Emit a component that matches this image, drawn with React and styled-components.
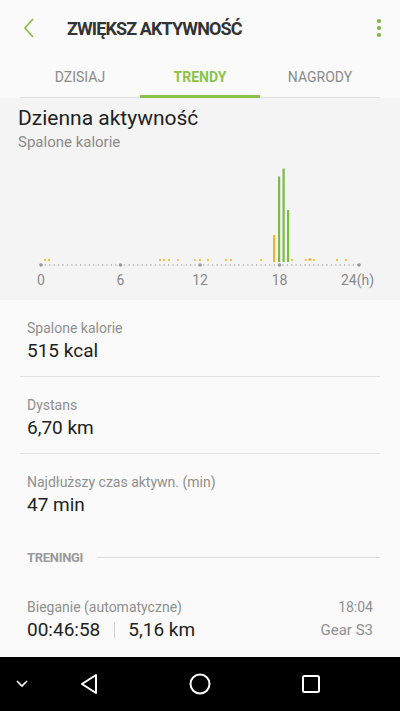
import React from 'react';
import styled, { createGlobalStyle } from 'styled-components';

const GlobalStyle = createGlobalStyle`
  html, body {
    margin: 0;
    padding: 0;
    background: #fafafa;
    font-family: Roboto, "Noto Sans", sans-serif;
  }
  * { box-sizing: border-box; }
`;

const Screen = styled.div`
  width: 400px;
  height: 711px;
  display: flex;
  flex-direction: column;
  background: #fafafa;
  overflow: hidden;

  & > * { flex-shrink: 0; }
`;

const Header = styled.header`
  height: 56px;
  display: flex;
  align-items: center;
  padding: 0 18px 0 22px;
`;

const Title = styled.h1`
  flex: 1;
  margin: 0 0 0 31px;
  font-size: 18px;
  font-weight: 700;
  letter-spacing: -0.9px;
  color: #333;
`;

const Tabs = styled.nav`
  margin: 0 20px;
  height: 42px;
  display: grid;
  grid-template-columns: repeat(3, 1fr);
  border-bottom: 1px solid #e0e0e0;
`;

const Tab = styled.div`
  display: flex;
  align-items: center;
  justify-content: center;
  font-size: 14px;
  font-weight: ${(p) => (p.$active ? 700 : 400)};
  color: ${(p) => (p.$active ? '#8bc34a' : '#8a8a8a')};
  border-bottom: 3px solid ${(p) => (p.$active ? '#8bc34a' : 'transparent')};
  margin-bottom: -1px;
  padding-top: 2px;
`;

const ChartSection = styled.section`
  background: #f4f4f4;
  padding: 6px 0 0;
  height: 202px;
`;

const ChartTitle = styled.div`
  padding-left: 18px;
  font-size: 21px;
  color: #222;
  line-height: 28px;
`;

const ChartSub = styled.div`
  padding-left: 18px;
  font-size: 15px;
  color: #8a8a8a;
  line-height: 20px;
`;

const Content = styled.div`
  flex: 1 1 auto;
  min-height: 0;
  overflow: hidden;
  padding: 0 20px;
`;

const Stat = styled.div`
  padding: 18px 7px 0;
  border-bottom: ${(p) => (p.$last ? 'none' : '1px solid #e2e2e2')};
  height: 77px;
`;

const Label = styled.div`
  font-size: 14px;
  color: #8f8f8f;
  line-height: 20px;
`;

const Value = styled.div`
  font-size: 19px;
  color: #222;
  line-height: 26px;
`;

const SectionHead = styled.div`
  display: flex;
  align-items: center;
  gap: 14px;
  padding-left: 7px;
  height: 52px;
  font-size: 13px;
  font-weight: 700;
  color: #9a9a9a;
  letter-spacing: -0.3px;

  &::after {
    content: '';
    flex: 1;
    height: 1px;
    background: #dcdcdc;
  }
`;

const Workout = styled.div`
  display: grid;
  grid-template-columns: 1fr auto;
  padding: 14px 7px 0;
`;

const Right = styled.div`
  text-align: right;
  color: #8f8f8f;
  font-size: ${(p) => p.$size || 14}px;
  line-height: ${(p) => (p.$size ? 26 : 20)}px;
`;

const Sep = styled.span`
  display: inline-block;
  width: 1px;
  height: 16px;
  background: #cfcfcf;
  margin: 0 13px 0 14px;
  vertical-align: -2px;
`;

const NavBar = styled.div`
  height: 54px;
  background: #000;
  position: relative;
`;

const NavSlot = styled.div`
  position: absolute;
  left: ${(p) => p.$x}px;
  top: 50%;
  transform: translate(-50%, -50%);
  display: flex;
`;

const dotsX = [45, 49, 160, 164, 169, 178, 195, 200, 208, 226, 231, 261, 292, 306, 314, 337, 346];

const Chart = () => {
  const base = 265;
  const top = 152;
  const ticks = [];
  for (let x = 41; x <= 359; x += 4.4) ticks.push(x);
  const majors = [41, 120.5, 200, 279.5, 359];
  const labels = ['0', '6', '12', '18', '24(h)'];
  return (
    <svg width="400" height="148" viewBox={`0 ${top} 400 148`} style={{ display: 'block' }}>
      {ticks.map((x, i) => (
        <circle key={i} cx={x} cy={base} r="0.8" fill="#a8a8a8" />
      ))}
      {majors.map((x, i) => (
        <circle key={'m' + i} cx={x} cy={base} r="1.8" fill="#9a9a9a" />
      ))}
      {dotsX.map((x, i) => (
        <circle key={'d' + i} cx={x} cy={260} r="1.1" fill="#f5b625" />
      ))}
      <circle cx={310} cy={259.5} r="1.6" fill="#f5b625" />
      <rect x={273} y={235} width={2.2} height={27} fill="#f5b625" />
      <rect x={278} y={176.5} width={2.2} height={85.5} fill="#7cba45" />
      <rect x={282.5} y={168.5} width={2.2} height={93.5} fill="#7cba45" />
      <rect x={287} y={210} width={2.2} height={52} fill="#7cba45" />
      {majors.map((x, i) => (
        <text
          key={'l' + i}
          x={i === 4 ? x - 18 : x}
          y={285}
          textAnchor={i === 4 ? 'start' : 'middle'}
          fontFamily="Roboto, sans-serif"
          fontSize="14"
          fill="#8a8a8a"
        >
          {labels[i]}
        </text>
      ))}
    </svg>
  );
};

const stats = [
  { label: 'Spalone kalorie', value: '515 kcal' },
  { label: 'Dystans', value: '6,70 km' },
  { label: 'Najdłuższy czas aktywn. (min)', value: '47 min' },
];

const App = () => (
  <Screen>
    <GlobalStyle />
    <Header>
      <svg width="14" height="22" viewBox="0 0 14 22">
        <path d="M11 2 L3 11 L11 20" fill="none" stroke="#8bc34a" strokeWidth="1.8" />
      </svg>
      <Title>ZWIĘKSZ AKTYWNOŚĆ</Title>
      <svg width="6" height="20" viewBox="0 0 6 20">
        <circle cx="3" cy="3" r="2.1" fill="#7cb342" />
        <circle cx="3" cy="10" r="2.1" fill="#7cb342" />
        <circle cx="3" cy="17" r="2.1" fill="#7cb342" />
      </svg>
    </Header>
    <Tabs>
      <Tab>DZISIAJ</Tab>
      <Tab $active>TRENDY</Tab>
      <Tab>NAGRODY</Tab>
    </Tabs>
    <ChartSection>
      <ChartTitle>Dzienna aktywność</ChartTitle>
      <ChartSub>Spalone kalorie</ChartSub>
      <Chart />
    </ChartSection>
    <Content>
      {stats.map((s, i) => (
        <Stat key={s.label} $last={i === stats.length - 1}>
          <Label>{s.label}</Label>
          <Value>{s.value}</Value>
        </Stat>
      ))}
      <SectionHead>TRENINGI</SectionHead>
      <Workout>
        <Label>Bieganie (automatyczne)</Label>
        <Right>18:04</Right>
        <Value>
          00:46:58<Sep />5,16 km
        </Value>
        <Right $size={15}>Gear S3</Right>
      </Workout>
    </Content>
    <NavBar>
      <NavSlot $x={22}>
        <svg width="14" height="10" viewBox="0 0 14 10">
          <path d="M2 2 L7 7 L12 2" fill="none" stroke="#fff" strokeWidth="1.6" />
        </svg>
      </NavSlot>
      <NavSlot $x={89}>
        <svg width="20" height="22" viewBox="0 0 20 22">
          <path d="M17 2 L3 11 L17 20 Z" fill="none" stroke="#fff" strokeWidth="2" strokeLinejoin="round" />
        </svg>
      </NavSlot>
      <NavSlot $x={200}>
        <svg width="22" height="22" viewBox="0 0 22 22">
          <circle cx="11" cy="11" r="9.5" fill="none" stroke="#fff" strokeWidth="2" />
        </svg>
      </NavSlot>
      <NavSlot $x={311}>
        <svg width="20" height="20" viewBox="0 0 20 20">
          <rect x="2" y="2" width="16" height="16" rx="1.5" fill="none" stroke="#fff" strokeWidth="2" />
        </svg>
      </NavSlot>
    </NavBar>
  </Screen>
);

export default App;
